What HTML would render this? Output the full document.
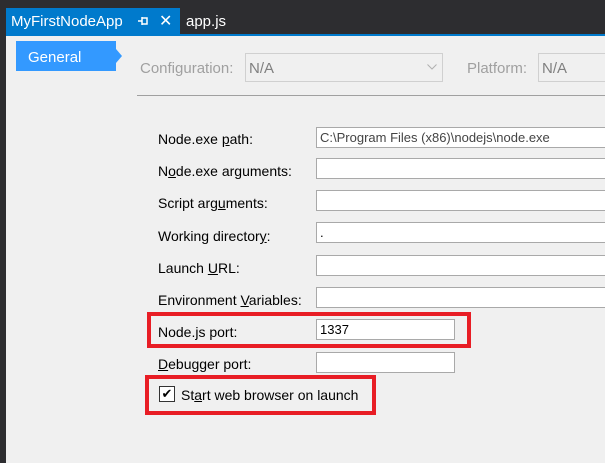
<!DOCTYPE html>
<html><head><style>
body{margin:0;width:605px;height:463px;overflow:hidden;background:#f0f0f0;font-family:"Liberation Sans",sans-serif;position:relative}
.a{position:absolute}
.lbl{position:absolute;left:158px;font-size:14px;color:#000}
.f{position:absolute;left:316px;height:19px;background:#fff;border:1px solid #a9a9a9;font-size:13px;line-height:19px;padding-left:3px;box-sizing:content-box}
.red{position:absolute;border:4px solid #e81d25;box-sizing:border-box}
</style></head><body>
<div class="a" style="left:0;top:0;width:605px;height:34px;background:#2d2d30"></div>
<div class="a" style="left:0;top:34px;width:605px;height:2px;background:#007acc"></div>
<div class="a" style="left:0;top:34px;width:6px;height:429px;background:#2d2d30"></div>
<div class="a" style="left:6px;top:8px;width:174px;height:27px;background:#007acc"></div>
<div class="a" style="left:11px;top:13px;color:#fff;font-size:15px">MyFirstNodeApp</div>
<svg class="a" style="left:137px;top:15px" width="12" height="12"><path d="M1 6H5M5 2V10M5 3H10V9H5" stroke="#fff" stroke-width="1.5" fill="none"/></svg>
<div class="a" style="left:159px;top:11px;color:#fff;font-size:16px">✕</div>
<div class="a" style="left:186px;top:13px;color:#fff;font-size:15px">app.js</div>
<div class="a" style="left:16px;top:41px;width:100px;height:30px;background:#3399ff"></div>
<div class="a" style="left:116px;top:49px;width:0;height:0;border-top:7px solid transparent;border-bottom:7px solid transparent;border-left:6px solid #3399ff"></div>
<div class="a" style="left:28px;top:49px;color:#fff;font-size:15px">General</div>
<div class="a" style="left:140px;top:60px;color:#a0a0a0;font-size:15px">Configuration:</div>
<div class="a" style="left:245px;top:53px;width:196px;height:27px;border:1px solid #d0d0d0"></div>
<div class="a" style="left:249px;top:60px;color:#808080;font-size:15px">N/A</div>
<svg class="a" style="left:427px;top:64px" width="10" height="6"><path d="M0.5 0.5L5 5L9.5 0.5" stroke="#b0b0b0" fill="none"/></svg>
<div class="a" style="left:467px;top:60px;color:#a0a0a0;font-size:15px">Platform:</div>
<div class="a" style="left:538px;top:53px;width:80px;height:27px;border:1px solid #d0d0d0"></div>
<div class="a" style="left:542px;top:60px;color:#808080;font-size:15px">N/A</div>
<div class="a" style="left:137px;top:95px;width:468px;height:1px;background:#a0a0a0"></div>

<div class="lbl" style="top:131px">Node.exe <u>p</u>ath:</div>
<div class="f" style="top:127px;width:300px;color:#444">C:\Program Files (x86)\nodejs\node.exe</div>
<div class="lbl" style="top:163px">N<u>o</u>de.exe arguments:</div>
<div class="f" style="top:158px;width:300px"></div>
<div class="lbl" style="top:195px">Script arg<u>u</u>ments:</div>
<div class="f" style="top:190px;width:300px"></div>
<div class="lbl" style="top:228px">Working director<u>y</u>:</div>
<div class="f" style="top:222px;width:300px">.</div>
<div class="lbl" style="top:260px">Launch <u>U</u>RL:</div>
<div class="f" style="top:255px;width:300px"></div>
<div class="lbl" style="top:292px">Environment <u>V</u>ariables:</div>
<div class="f" style="top:287px;width:300px"></div>
<div class="lbl" style="top:324px">Node.js port:</div>
<div class="f" style="top:319px;width:134px">1337</div>
<div class="lbl" style="top:356px"><u>D</u>ebugger port:</div>
<div class="f" style="top:352px;width:134px"></div>
<div class="a" style="left:159px;top:386px;width:14px;height:14px;border:1px solid #333;background:#fff;font-size:13px;line-height:14px;text-align:center">✔</div>
<div class="a" style="left:181px;top:387px;font-size:14px">St<u>a</u>rt web browser on launch</div>
<div class="red" style="left:147px;top:312px;width:324px;height:36px"></div>
<div class="red" style="left:145px;top:375px;width:231px;height:40px"></div>
</body></html>
